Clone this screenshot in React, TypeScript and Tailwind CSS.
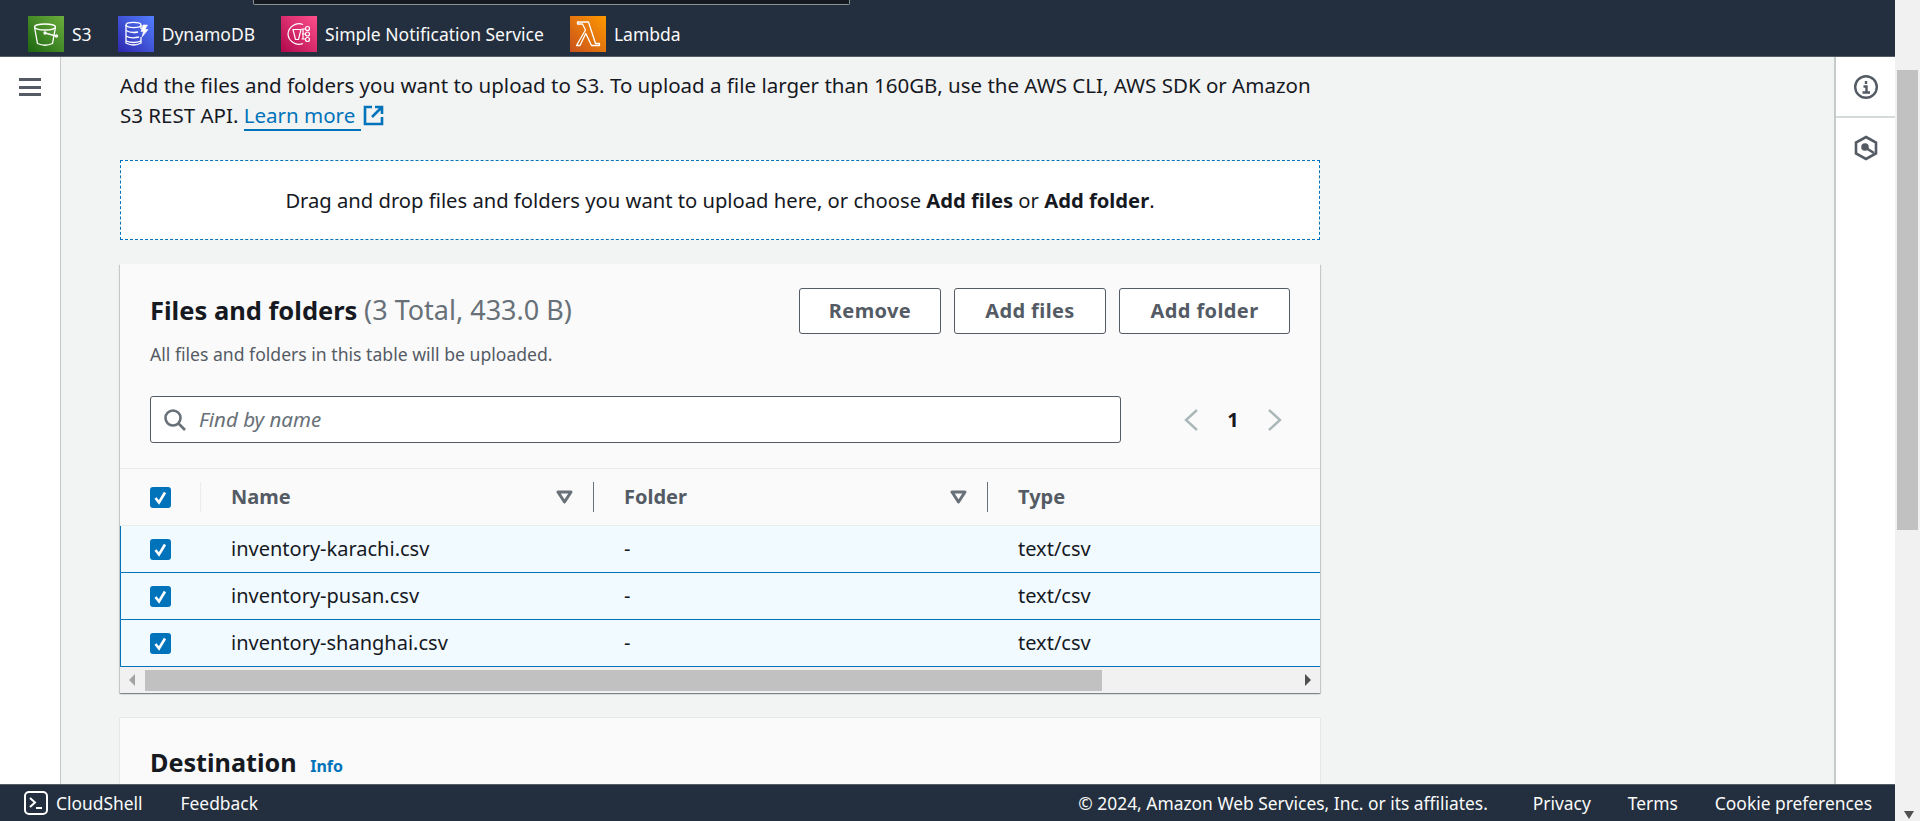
const PANEL_BLUE = '#0073bb';

function Checkbox() {
  return (
    <span className="flex h-[21px] w-[21px] items-center justify-center rounded-[3px] bg-[#0073bb]">
      <svg width="15" height="15" viewBox="0 0 15 15" fill="none">
        <path d="M2.5 8 L6 12.5 L12 2.5" stroke="#fff" strokeWidth="2.6" />
      </svg>
    </span>
  );
}

function FilterIcon() {
  return (
    <svg width="17" height="14" viewBox="0 0 17 14" fill="none">
      <path d="M2 2 H15 L8.5 12 Z" stroke="#687078" strokeWidth="3" strokeLinejoin="round" />
    </svg>
  );
}

function S3Icon() {
  return (
    <svg width="36" height="36" viewBox="0 0 36 36" fill="none">
      <defs>
        <linearGradient id="s3g" x1="0" y1="1" x2="1" y2="0">
          <stop offset="0" stopColor="#1b660f" />
          <stop offset="1" stopColor="#6cae3e" />
        </linearGradient>
      </defs>
      <rect width="36" height="36" fill="url(#s3g)" />
      <g stroke="#fff" strokeWidth="1.3">
        <ellipse cx="17" cy="11" rx="10.5" ry="3" />
        <path d="M6.5 11 L9.5 27.5 Q17 31 24.5 27.5 L27.5 11" />
        <path d="M17 17 L28 20" />
        <circle cx="17" cy="17" r="1" />
        <circle cx="28.5" cy="20" r="1" />
      </g>
    </svg>
  );
}

function DynamoIcon() {
  return (
    <svg width="36" height="36" viewBox="0 0 36 36" fill="none">
      <defs>
        <linearGradient id="ddbg" x1="0" y1="1" x2="1" y2="0">
          <stop offset="0" stopColor="#2e27ad" />
          <stop offset="1" stopColor="#527fff" />
        </linearGradient>
      </defs>
      <rect width="36" height="36" fill="url(#ddbg)" />
      <g stroke="#fff" strokeWidth="1.3">
        <ellipse cx="15.5" cy="9" rx="7.5" ry="2.6" />
        <path d="M8 9 V27 Q15.5 31 23 27 V21" />
        <path d="M8 14.5 Q13 17.5 20 16" />
        <path d="M8 20 Q13 23 21 21" />
        <path d="M8 25 Q15.5 28 23 25" />
        <path d="M23 9 V13" />
        <path d="M25 9 H29.5 L27 13.5 H30 L24 21 L25.5 15.5 H23 Z" fill="#fff" strokeWidth="0.6" />
      </g>
    </svg>
  );
}

function SnsIcon() {
  return (
    <svg width="36" height="36" viewBox="0 0 36 36" fill="none">
      <defs>
        <linearGradient id="snsg" x1="0" y1="1" x2="1" y2="0">
          <stop offset="0" stopColor="#b0084d" />
          <stop offset="1" stopColor="#ff4f8b" />
        </linearGradient>
      </defs>
      <rect width="36" height="36" fill="url(#snsg)" />
      <g stroke="#fff" strokeWidth="1.2">
        <path d="M22 8.5 A11 11 0 0 0 7 18 A11 11 0 0 0 22 27.5" />
        <path d="M12 13.5 H20 L17.5 23.5 H14.5 Z" />
        <path d="M20.5 13 H24 M21 18 H24 M20.5 23 H24 M22 13 V23" />
        <circle cx="26.5" cy="12.5" r="2" />
        <circle cx="26.5" cy="18" r="2" />
        <circle cx="26.5" cy="23.5" r="2" />
      </g>
    </svg>
  );
}

function LambdaIcon() {
  return (
    <svg width="36" height="36" viewBox="0 0 36 36" fill="none">
      <defs>
        <linearGradient id="lamg" x1="0" y1="1" x2="1" y2="0">
          <stop offset="0" stopColor="#c8511b" />
          <stop offset="1" stopColor="#ff9900" />
        </linearGradient>
      </defs>
      <rect width="36" height="36" fill="url(#lamg)" />
      <path
        d="M6.5 29.5 L15.5 14 L12.5 8 H7.5 V6 H18.5 L25.5 27.5 H29.5 V29.5 H21.5 L15.8 17.5 L10 29.5 Z"
        stroke="#fff"
        strokeWidth="1.3"
        strokeLinejoin="round"
      />
    </svg>
  );
}

const services = [
  { name: 'S3', icon: <S3Icon /> },
  { name: 'DynamoDB', icon: <DynamoIcon /> },
  { name: 'Simple Notification Service', icon: <SnsIcon /> },
  { name: 'Lambda', icon: <LambdaIcon /> },
];

const files = ['inventory-karachi.csv', 'inventory-pusan.csv', 'inventory-shanghai.csv'];

export default function App() {
  return (
    <div className="flex h-[821px] w-full overflow-hidden bg-[#f1f1f1] font-['Noto_Sans',sans-serif] text-[#16191f]">
      <div className="flex w-[1895px] flex-col">
        <header className="relative flex h-[57px] shrink-0 gap-[26px] border-b border-[#545b64] bg-[#232f3e] pt-4 pl-7">
          <div className="absolute top-0 left-[253px] h-[5px] w-[597px] rounded-b-[2px] border-x border-b border-[#879596] bg-[#16191f]" />
          {services.map((s) => (
            <div key={s.name} className="flex h-9 items-center gap-2 text-[17.5px] text-[#fafafa]">
              {s.icon}
              <span>{s.name}</span>
            </div>
          ))}
        </header>

        <div className="flex min-h-0 flex-1">
          <nav className="flex w-[61px] shrink-0 justify-start border-r border-[#c5cbcb] bg-white pt-[21px] pl-[19px]">
            <div className="flex h-[18px] w-[22px] flex-col justify-between">
              <span className="h-[3px] bg-[#545b64]" />
              <span className="h-[3px] bg-[#545b64]" />
              <span className="h-[3px] bg-[#545b64]" />
            </div>
          </nav>

          <main className="min-w-0 flex-1 overflow-hidden bg-[#f2f3f3] pt-[13px] pl-[59px]">
            <div className="w-[1200px]">
              <p className="max-w-[1195px] text-[20.5px] leading-[30px]">
                Add the files and folders you want to upload to S3. To upload a file larger than 160GB, use the AWS CLI, AWS SDK or Amazon S3 REST API.{' '}
                <a className="border-b-2 border-[#0073bb] text-[#0073bb]">Learn more </a>
                <svg className="ml-0.5 inline-block align-[-3px]" width="21" height="21" viewBox="0 0 21 21" fill="none" stroke={PANEL_BLUE} strokeWidth="2.6">
                  <path d="M9 2 H2 V19 H19 V12" />
                  <path d="M12 2 H19 V9 M19 2 L9 12" />
                </svg>
              </p>

              <div className="mt-[30px] flex h-20 items-center justify-center border border-dashed border-[#0073bb] bg-white text-[20.2px]">
                <span>
                  Drag and drop files and folders you want to upload here, or choose <b>Add files</b> or <b>Add folder</b>.
                </span>
              </div>

              <section className="mt-6 bg-[#fafafa] shadow-[0_1px_1px_0_rgba(0,28,36,0.3),1px_1px_1px_0_rgba(0,28,36,0.15),-1px_1px_1px_0_rgba(0,28,36,0.15)]">
                <div className="border-b border-[#eaeded] px-[30px] pt-6 pb-[25px]">
                  <div className="flex justify-between">
                    <div>
                      <h2 className="mt-[7px] text-[25.5px] leading-[30px] font-bold">
                        Files and folders <span className="text-[27px] font-normal text-[#687078]">(3 Total, 433.0 B)</span>
                      </h2>
                      <p className="mt-[17px] text-[17.6px] leading-6 text-[#545b64]">All files and folders in this table will be uploaded.</p>
                    </div>
                    <div className="flex h-[46px] gap-[13px] text-[20px] font-bold tracking-[0.4px] text-[#545b64]">
                      <button className="w-[142px] rounded-[3px] border border-[#545b64] bg-white">Remove</button>
                      <button className="w-[152px] rounded-[3px] border border-[#545b64] bg-white">Add files</button>
                      <button className="w-[171px] rounded-[3px] border border-[#545b64] bg-white">Add folder</button>
                    </div>
                  </div>

                  <div className="mt-[30px] flex items-center">
                    <div className="flex h-[47px] w-[971px] items-center gap-3 rounded-[3px] border border-[#545b64] bg-white pl-3">
                      <svg width="24" height="24" viewBox="0 0 24 24" fill="none" stroke="#687078" strokeWidth="2.6">
                        <circle cx="10" cy="10" r="7.5" />
                        <path d="M15.5 15.5 L22 22" />
                      </svg>
                      <span className="text-[20.5px] text-[#687078] italic">Find by name</span>
                    </div>
                    <div className="ml-[62px] flex items-center">
                      <svg width="16" height="24" viewBox="0 0 16 24" fill="none" stroke="#aab7b8" strokeWidth="2.4">
                        <path d="M14 2 L3 12 L14 22" />
                      </svg>
                      <span className="w-[68px] text-center text-[20px] font-bold">1</span>
                      <svg width="16" height="24" viewBox="0 0 16 24" fill="none" stroke="#aab7b8" strokeWidth="2.4">
                        <path d="M2 2 L13 12 L2 22" />
                      </svg>
                    </div>
                  </div>
                </div>

                <div className="flex h-[57px] items-center border-b border-[#eaeded] text-[20px] font-bold text-[#545b64]">
                  <div className="flex w-20 shrink-0 pl-[30px]">
                    <Checkbox />
                  </div>
                  <div className="flex h-[30px] w-[393px] shrink-0 items-center justify-between border-l border-[#eaeded] pr-[20px] pl-[30px]">
                    <span>Name</span>
                    <FilterIcon />
                  </div>
                  <div className="flex h-[30px] w-[394px] shrink-0 items-center justify-between border-l border-[#687078] pr-[20px] pl-[30px]">
                    <span>Folder</span>
                    <FilterIcon />
                  </div>
                  <div className="flex h-[30px] flex-1 items-center border-l border-[#687078] pl-[30px]">
                    <span>Type</span>
                  </div>
                </div>

                {files.map((f) => (
                  <div key={f} className="flex h-[47px] items-center border-b border-l border-[#0073bb] bg-[#f1faff] text-[20px]">
                    <div className="flex w-[79px] shrink-0 pl-[29px]">
                      <Checkbox />
                    </div>
                    <div className="w-[393px] shrink-0 pl-[31px]">{f}</div>
                    <div className="w-[394px] shrink-0 pl-[31px]">-</div>
                    <div className="flex-1 pl-[31px]">text/csv</div>
                  </div>
                ))}

                <div className="flex h-[26px] items-center bg-[#f1f1f1]">
                  <svg className="ml-[9px]" width="7" height="12" viewBox="0 0 7 12">
                    <path d="M6 0 V12 L0 6 Z" fill="#a3a3a3" />
                  </svg>
                  <div className="ml-[9px] h-[21px] w-[957px] bg-[#c1c1c1]" />
                  <svg className="ml-[203px]" width="7" height="12" viewBox="0 0 7 12">
                    <path d="M0 0 V12 L6 6 Z" fill="#505050" />
                  </svg>
                </div>
              </section>

              <section className="mt-[25px] h-[80px] bg-[#fafafa] px-[30px] pt-[26px] shadow-[0_0_1px_0_rgba(0,28,36,0.3)]">
                <h2 className="text-[25.2px] leading-9 font-bold">
                  Destination <a className="ml-[7px] text-[16px] text-[#0073bb]">Info</a>
                </h2>
              </section>
            </div>
          </main>

          <aside className="w-[61px] shrink-0 border-l-2 border-[#c5cbcb] bg-white">
            <div className="flex h-[61px] items-center justify-center border-b-2 border-[#d5dbdb]">
              <svg width="26" height="26" viewBox="0 0 26 26" fill="none" stroke="#545b64" strokeWidth="2.4">
                <circle cx="13" cy="13" r="10.8" />
                <path d="M13 7 V10 M10.5 12.5 H13.5 V18.5 M9.5 18.5 H17" />
              </svg>
            </div>
            <div className="flex justify-center pt-[17px]">
              <svg width="24" height="26" viewBox="0 0 24 26" fill="none" stroke="#545b64" strokeWidth="2.6">
                <path d="M12 2 L22 7.5 V18.5 L12 24 L2 18.5 V7.5 Z" />
                <circle cx="11" cy="12" r="2.5" fill="#545b64" />
                <path d="M12 13 L20 18" />
              </svg>
            </div>
          </aside>
        </div>

        <footer className="flex h-[37px] shrink-0 items-center border-t border-[#545b64] bg-[#232f3e] pr-[23px] pl-6 text-[17.4px] text-[#fafafa]">
          <svg width="24" height="24" viewBox="0 0 24 24" fill="none" stroke="#fff" strokeWidth="2">
            <rect x="1" y="1" width="22" height="22" rx="4" />
            <path d="M6 7 L11 11.5 L6 16 M12 17 H18" />
          </svg>
          <span className="ml-2">CloudShell</span>
          <span className="ml-[38px]">Feedback</span>
          <div className="ml-auto flex gap-[37px]">
            <span className="mr-2">© 2024, Amazon Web Services, Inc. or its affiliates.</span>
            <span>Privacy</span>
            <span>Terms</span>
            <span>Cookie preferences</span>
          </div>
        </footer>
      </div>

      <div className="flex w-[25px] shrink-0 flex-col items-start pl-[2px]">
        <div className="mt-[70px] h-[460px] w-[21px] bg-[#c1c1c1]" />
        <svg className="mt-auto mb-[2px] ml-[7px]" width="10" height="8" viewBox="0 0 10 8">
          <path d="M0 0 H10 L5 8 Z" fill="#505050" />
        </svg>
      </div>
    </div>
  );
}
